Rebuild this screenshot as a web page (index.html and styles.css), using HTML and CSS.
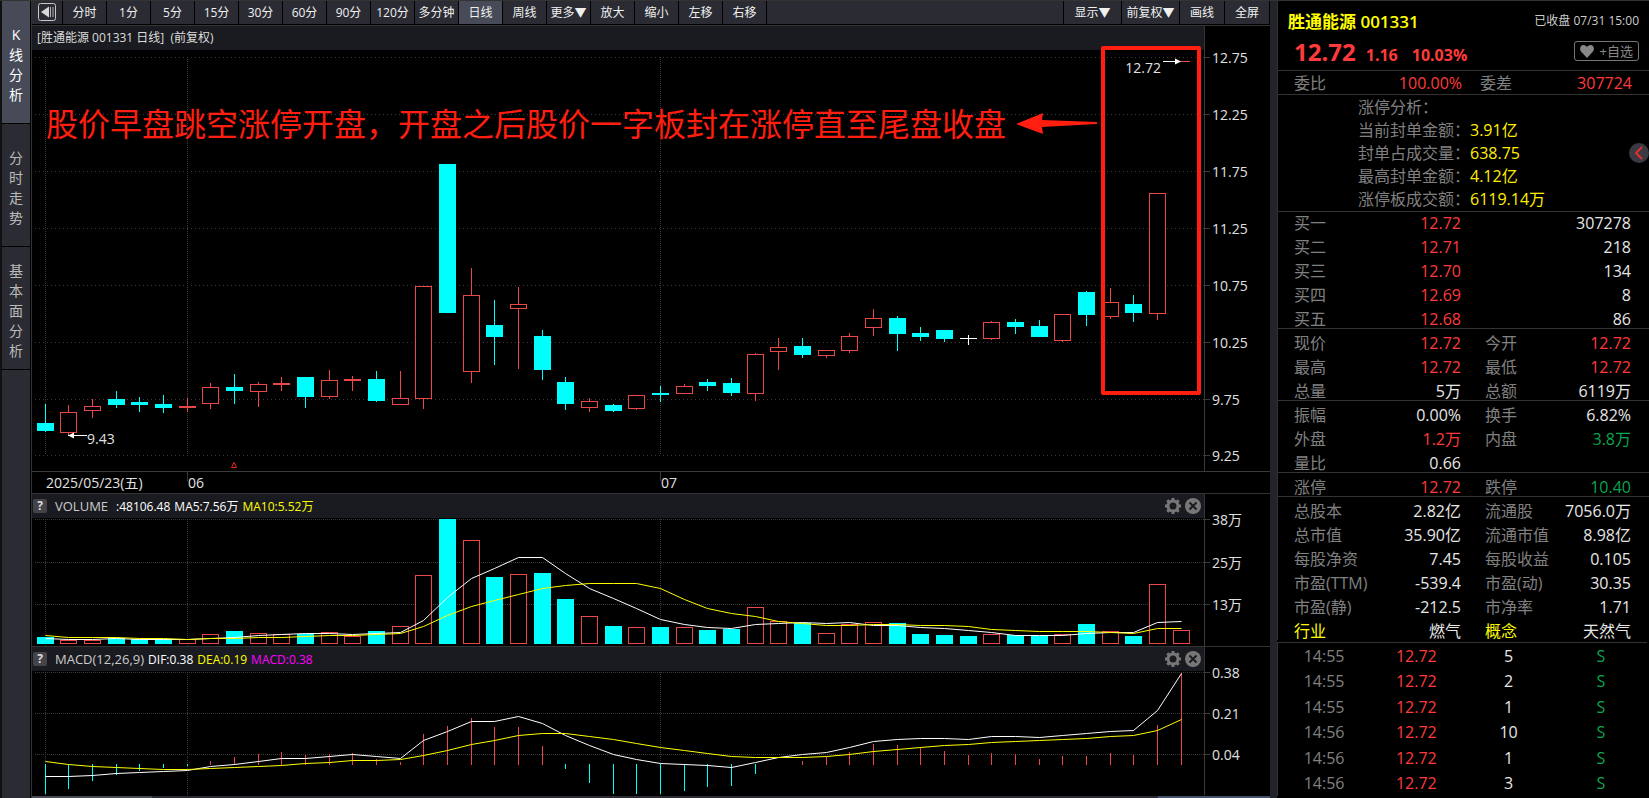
FILE: index.html
```html
<!DOCTYPE html>
<html lang="zh-CN">
<head>
  <meta charset="UTF-8">
  <title>胜通能源 001331</title>
  <meta name="viewport" content="width=device-width, initial-scale=1.0">
  <link rel="stylesheet" href="styles.css">
</head>
<body>
  <div class="app">
    <nav class="side">
      <button class="side-tab active"><span>K线分析</span></button>
      <button class="side-tab"><span>分时走势</span></button>
      <button class="side-tab"><span>基本面分析</span></button>
    </nav>

    <main class="main">
      <div class="toolbar">
        <button class="tool back" aria-label="收起">
          <svg width="18" height="18" viewBox="0 0 18 18">
            <rect x="0.5" y="0.5" width="17" height="17" rx="2" fill="none" stroke="#c8c8c8"/>
            <path d="M3 9 L11 3.5 V14.5 Z" fill="#d8d8d8"/>
            <path d="M12.5 4 V14 M15 4 V14" stroke="#b0b0b0"/>
          </svg>
        </button>
        <button class="tool">分时</button>
        <button class="tool">1分</button>
        <button class="tool">5分</button>
        <button class="tool">15分</button>
        <button class="tool">30分</button>
        <button class="tool">60分</button>
        <button class="tool">90分</button>
        <button class="tool">120分</button>
        <button class="tool">多分钟</button>
        <button class="tool active">日线</button>
        <button class="tool">周线</button>
        <button class="tool">更多▼</button>
        <button class="tool">放大</button>
        <button class="tool">缩小</button>
        <button class="tool">左移</button>
        <button class="tool">右移</button>
        <span class="tool-space"></span>
        <button class="tool wide">显示▼</button>
        <button class="tool wide">前复权▼</button>
        <button class="tool mid">画线</button>
        <button class="tool mid">全屏</button>
      </div>

      <section class="pane kline">
        <div class="pane-head kline-head">[胜通能源 001331 日线]&nbsp; (前复权)</div>
        <svg id="kline" class="chart chart-k"></svg>
        <div class="note">
          <span>股价早盘跳空涨停开盘，开盘之后股价一字板封在涨停直至尾盘收盘</span>
          <svg width="82" height="22" viewBox="0 0 82 22">
            <path d="M0 11 L27 0 L26 7 L81 9 V11 L26 14 L27 21 Z" fill="#ff1e0f"/>
          </svg>
        </div>
        <div class="frame"></div>
      </section>

      <section class="pane">
        <div class="pane-head">
          <button class="help">?</button>
          <span class="ind-name">VOLUME</span>
          <span class="white">:48106.48</span>
          <span class="white">MA5:7.56万</span>
          <span class="yellow">MA10:5.52万</span>
          <span class="head-icons">
            <button aria-label="设置"><svg width="16" height="16" viewBox="0 0 16 16"><circle cx="8" cy="8" r="5" fill="none" stroke="#777" stroke-width="3"/><path d="M8 0V3M8 13V16M0 8H3M13 8H16M2.3 2.3L4.4 4.4M11.6 11.6L13.7 13.7M2.3 13.7L4.4 11.6M11.6 4.4L13.7 2.3" stroke="#777" stroke-width="3"/></svg></button>
            <button aria-label="关闭"><svg width="16" height="16" viewBox="0 0 16 16"><circle cx="8" cy="8" r="8" fill="#777"/><path d="M4.5 4.5L11.5 11.5M11.5 4.5L4.5 11.5" stroke="#1a1b20" stroke-width="2"/></svg></button>
          </span>
        </div>
        <svg id="volume" class="chart chart-v"></svg>
      </section>

      <section class="pane">
        <div class="pane-head">
          <button class="help">?</button>
          <span class="ind-name">MACD(12,26,9)</span>
          <span class="white">DIF:0.38</span>
          <span class="yellow">DEA:0.19</span>
          <span class="magenta">MACD:0.38</span>
          <span class="head-icons">
            <button aria-label="设置"><svg width="16" height="16" viewBox="0 0 16 16"><circle cx="8" cy="8" r="5" fill="none" stroke="#777" stroke-width="3"/><path d="M8 0V3M8 13V16M0 8H3M13 8H16M2.3 2.3L4.4 4.4M11.6 11.6L13.7 13.7M2.3 13.7L4.4 11.6M11.6 4.4L13.7 2.3" stroke="#777" stroke-width="3"/></svg></button>
            <button aria-label="关闭"><svg width="16" height="16" viewBox="0 0 16 16"><circle cx="8" cy="8" r="8" fill="#777"/><path d="M4.5 4.5L11.5 11.5M11.5 4.5L4.5 11.5" stroke="#1a1b20" stroke-width="2"/></svg></button>
          </span>
        </div>
        <svg id="macd" class="chart chart-m"></svg>
      </section>
      <div class="scroll"><i class="scroll-left"></i><i class="scroll-right"></i></div>
    </main>

    <aside class="quote">
      <header class="quote-head">
        <div class="line">
          <h1>胜通能源 001331</h1>
          <span class="time">已收盘 07/31 15:00</span>
        </div>
        <div class="line price-line">
          <b class="price">12.72</b>
          <b class="chg">1.16</b>
          <b class="chg">10.03%</b>
          <button class="fav">
            <svg width="14" height="13" viewBox="0 0 14 13"><path d="M7 13 L1 6.5 C-1 3.5 0.5 0 3.5 0 C5.3 0 6.4 1 7 2.2 C7.6 1 8.7 0 10.5 0 C13.5 0 15 3.5 13 6.5 Z" fill="#888"/></svg>
            +自选
          </button>
        </div>
      </header>

      <div class="ratio">
        <span>委比</span><span class="red">100.00%</span>
        <span>委差</span><span class="red">307724</span>
      </div>

      <dl class="limit">
        <dt>涨停分析：</dt><dd></dd>
        <dt>当前封单金额：</dt><dd>3.91亿</dd>
        <dt>封单占成交量：</dt><dd>638.75</dd>
        <dt>最高封单金额：</dt><dd>4.12亿</dd>
        <dt>涨停板成交额：</dt><dd>6119.14万</dd>
      </dl>
      <button class="fold" aria-label="展开">
        <svg width="8" height="14" viewBox="0 0 8 14"><path d="M7 1 L1 7 L7 13" fill="none" stroke="#e03030" stroke-width="2"/></svg>
      </button>

      <table class="info">
        <colgroup><col class="c1"><col class="c2"><col class="c3"><col></colgroup>
        <tbody>
          <tr><th>买一</th><td class="red">12.72</td><th></th><td>307278</td></tr>
          <tr><th>买二</th><td class="red">12.71</td><th></th><td>218</td></tr>
          <tr><th>买三</th><td class="red">12.70</td><th></th><td>134</td></tr>
          <tr><th>买四</th><td class="red">12.69</td><th></th><td>8</td></tr>
          <tr><th>买五</th><td class="red">12.68</td><th></th><td>86</td></tr>
        </tbody>
        <tbody>
          <tr><th>现价</th><td class="red">12.72</td><th>今开</th><td class="red">12.72</td></tr>
          <tr><th>最高</th><td class="red">12.72</td><th>最低</th><td class="red">12.72</td></tr>
          <tr><th>总量</th><td>5万</td><th>总额</th><td>6119万</td></tr>
        </tbody>
        <tbody>
          <tr><th>振幅</th><td>0.00%</td><th>换手</th><td>6.82%</td></tr>
          <tr><th>外盘</th><td class="red">1.2万</td><th>内盘</th><td class="green">3.8万</td></tr>
          <tr><th>量比</th><td>0.66</td><th></th><td></td></tr>
        </tbody>
        <tbody>
          <tr><th>涨停</th><td class="red">12.72</td><th>跌停</th><td class="green">10.40</td></tr>
        </tbody>
        <tbody>
          <tr><th>总股本</th><td>2.82亿</td><th>流通股</th><td>7056.0万</td></tr>
          <tr><th>总市值</th><td>35.90亿</td><th>流通市值</th><td>8.98亿</td></tr>
          <tr><th>每股净资</th><td>7.45</td><th>每股收益</th><td>0.105</td></tr>
          <tr><th>市盈(TTM)</th><td>-539.4</td><th>市盈(动)</th><td>30.35</td></tr>
          <tr><th>市盈(静)</th><td>-212.5</td><th>市净率</th><td>1.71</td></tr>
          <tr><th class="yellow">行业</th><td>燃气</td><th class="yellow">概念</th><td>天然气</td></tr>
        </tbody>
      </table>

      <table class="ticks">
        <tr><th>14:55</th><td class="red">12.72</td><td>5</td><td class="green">S</td></tr>
        <tr><th>14:55</th><td class="red">12.72</td><td>2</td><td class="green">S</td></tr>
        <tr><th>14:55</th><td class="red">12.72</td><td>1</td><td class="green">S</td></tr>
        <tr><th>14:56</th><td class="red">12.72</td><td>10</td><td class="green">S</td></tr>
        <tr><th>14:56</th><td class="red">12.72</td><td>1</td><td class="green">S</td></tr>
        <tr><th>14:56</th><td class="red">12.72</td><td>3</td><td class="green">S</td></tr>
      </table>
    </aside>
  </div>

  <script src="chart.js"></script>
</body>
</html>
```
FILE: styles.css
```css
* {
  box-sizing: border-box;
}

body {
  margin: 0;
  background: #000;
  color: #e6e6e6;
  font-family: "Open Sans", "Noto Sans CJK SC", sans-serif;
  font-size: 12px;
}

button {
  margin: 0;
  padding: 0;
  border: none;
  background: none;
  color: inherit;
  font: inherit;
  cursor: pointer;
}

.red { color: #ff3a3a; }
.green { color: #0aa54e; }
.white { color: #fff; }
.yellow { color: #ffff00; }
.magenta { color: #ff00ff; }

.app {
  display: flex;
  min-height: 100vh;
  border-top: 1px solid #333;
}

/* left tabs */
.side {
  flex: none;
  width: 31px;
  background: #2b2b33;
  border-left: 2px solid #111;
  border-right: 1px solid #000;
}

.side-tab {
  display: flex;
  justify-content: center;
  align-items: center;
  width: 100%;
  height: 123px;
  padding-top: 6px;
  border-bottom: 1px solid #000;
  color: #bbb;
  font-size: 14px;
  line-height: 20px;
}

.side-tab span {
  width: 14px;
  word-break: break-all;
}

.side-tab.active {
  background: #464b57;
  color: #fff;
}

/* charts */
.main {
  flex: 1;
  min-width: 0;
  display: flex;
  flex-direction: column;
  border-left: 1px solid #333;
}

.toolbar {
  display: flex;
  height: 25px;
  padding-bottom: 1px;
  background: #000;
  border-bottom: 1px solid #333;
}

.tool {
  flex: none;
  width: 44px;
  padding-bottom: 1px;
  background: #2a2b33;
  border-right: 1px solid #000;
  color: #f0f0f0;
  white-space: nowrap;
}

.tool.active {
  background: #464b57;
}

.tool.back {
  width: 31px;
  display: flex;
  align-items: center;
  justify-content: center;
}

.tool.wide { width: 58px; }
.tool.mid { width: 45px; }

.tool-space {
  flex: 1;
  background: #2a2b33;
  border-right: 1px solid #000;
}

.pane {
  position: relative;
  border-top: 1px solid #333;
}

.kline {
  border-top: none;
}

.pane-head {
  display: flex;
  align-items: center;
  gap: 4px;
  height: 24px;
  margin-right: 65px;
  padding: 0 3px 0 1px;
  background: #1a1b20;
  border-right: 1px solid #333;
  color: #ccc;
  white-space: nowrap;
}

.kline-head {
  padding: 0 0 2px 5px;
  color: #ddd;
}

.help {
  width: 14px;
  height: 14px;
  margin-right: 4px;
  border-radius: 2px;
  background: #444448;
  color: #ddd;
  font-weight: bold;
  line-height: 14px;
}

.ind-name {
  min-width: 57px;
  font-size: 13px;
}

.head-icons {
  display: flex;
  gap: 4px;
  margin-left: auto;
}

.head-icons svg {
  display: block;
}

.chart {
  display: block;
  width: 100%;
  overflow: visible;
  font-size: 14px;
}

.chart-k { height: 443px; }
.chart-v { height: 128px; }
.chart-m { height: 125px; }

.chart text {
  fill: #e0e0e0;
}

.note {
  position: absolute;
  top: 75px;
  right: 172px;
  display: flex;
  align-items: center;
  gap: 10px;
  color: #ff1e0f;
  font-size: 32px;
  line-height: 46px;
  white-space: nowrap;
}

.frame {
  position: absolute;
  top: 20px;
  right: 69px;
  width: 100px;
  height: 349px;
  border: 4px solid #ff1e0f;
  border-radius: 2px;
}

.scroll {
  display: flex;
  justify-content: space-between;
  flex: 1;
  min-height: 2px;
  background: #2a2b33;
}

.scroll-left {
  width: 120px;
  background: #484b55;
}

.scroll-right {
  width: 112px;
  background: #43536b;
}

/* right quote panel */
.quote {
  position: relative;
  flex: none;
  display: flex;
  flex-direction: column;
  width: 379px;
  background: #000;
  border-left: 7px solid #23232b;
  font-size: 16px;
}

.quote-head {
  height: 70px;
  padding: 7px 10px 0 10px;
  border-left: 1px solid #333;
  border-bottom: 1px solid #333;
}

.line {
  display: flex;
  align-items: center;
  height: 24px;
}

h1 {
  margin: 0;
  color: #ffff00;
  font-size: 17px;
  font-weight: 600;
}

.time {
  margin-left: auto;
  color: #ccc;
  font-size: 12px;
}

.price-line {
  align-items: baseline;
  height: 38px;
  padding-left: 6px;
  line-height: 40px;
  color: #ff3a3a;
}

.price {
  margin-right: 10px;
  font-size: 24px;
}

.chg {
  margin-right: 14px;
  font-size: 16px;
}

.fav {
  display: flex;
  align-items: center;
  align-self: flex-start;
  justify-content: space-between;
  width: 65px;
  height: 20px;
  margin: 9px 0 0 auto;
  padding: 0 5px;
  border: 1px solid #777;
  border-radius: 3px;
  color: #888;
  font-size: 13px;
  line-height: 18px;
}

.ratio {
  display: grid;
  grid-template-columns: 84px 84px 60px 1fr;
  height: 24px;
  padding: 0 17px 0 16px;
  border-left: 1px solid #333;
  border-bottom: 1px solid #333;
  color: #808080;
  line-height: 24px;
}

.ratio .red {
  text-align: right;
}

.ratio span:nth-child(3) {
  padding-left: 18px;
}

.limit {
  display: grid;
  grid-template-columns: 112px 1fr;
  grid-auto-rows: 23px;
  height: 116px;
  margin: 0;
  padding: 1px 0 0 80px;
  border-left: 1px solid #333;
  color: #808080;
  line-height: 23px;
}

.limit dt {
  white-space: nowrap;
}

.limit dd {
  margin: 0;
  color: #ffee00;
}

.fold {
  position: absolute;
  top: 142px;
  right: 0;
  display: flex;
  align-items: center;
  justify-content: center;
  width: 20px;
  height: 20px;
  border-radius: 50%;
  background: #3a3a42;
}

table {
  width: 100%;
  border-spacing: 0;
  border-left: 1px solid #333;
}

th {
  color: #808080;
  font-weight: normal;
  text-align: left;
  white-space: nowrap;
}

.info {
  table-layout: fixed;
}

.info th,
.info td {
  height: 24px;
  padding: 6px 0 0 0;
  line-height: 18px;
}

.info td {
  text-align: right;
  white-space: nowrap;
}

.info th:first-child { padding-left: 16px; }
.info th:nth-child(3) { padding-left: 24px; }
.info td:last-child { padding-right: 18px; }

.info tr:first-child > * {
  padding-top: 5px;
  border-top: 1px solid #333;
}

.info tbody:first-of-type tr:first-child > * {
  height: 21px;
  padding-top: 2px;
}

.info .yellow { color: #ffff00; }

.c1 { width: 101px; }
.c2 { width: 82px; }
.c3 { width: 92px; }

.ticks {
  flex: 1;
  width: auto;
  margin: 2px 2px 2px 0;
  border-top: 1px solid #333;
  table-layout: fixed;
}

.ticks th,
.ticks td {
  width: 25%;
  padding: 0;
  line-height: 20px;
  text-align: center;
}
```
FILE: chart.js
```js
const RED = '#e84848';
const CYAN = '#00ffff';
const GRID = '#3a3a3a';
const AXIS = 66;

// [color, high, body top, body bottom, low]
const candles = [
  ['c',404,423,431,432], ['r',405,412,433,436], ['r',399,406,411,418], ['c',391,399,405,408],
  ['c',397,402,405,412], ['c',395,404,408,413], ['r',398,406,408,412], ['r',383,387,404,409],
  ['c',374,387,391,404], ['r',382,384,392,407], ['r',377,383,385,391], ['c',377,377,397,408],
  ['r',370,380,397,399], ['r',376,379,381,391], ['c',371,379,401,402], ['r',371,398,405,405],
  ['r',286,286,399,409], ['c',164,164,313,313], ['r',268,295,372,383], ['c',300,325,337,365],
  ['r',287,304,309,369], ['c',330,336,370,380], ['c',377,382,404,410], ['r',398,401,408,412],
  ['c',404,405,411,412], ['r',395,395,409,410], ['c',386,393,395,402], ['r',384,386,394,394],
  ['c',379,382,386,391], ['c',378,383,393,396], ['r',353,354,394,401], ['r',338,347,352,370],
  ['c',338,346,355,358], ['r',350,350,356,358], ['r',333,336,351,353], ['r',309,318,328,336],
  ['c',316,318,334,351], ['c',327,333,337,341], ['c',330,330,339,342], ['w',335,338,339,345],
  ['r',321,322,339,340], ['c',319,322,327,334], ['c',320,326,337,337], ['r',314,314,341,342],
  ['c',291,292,315,326], ['r',288,302,317,319], ['c',295,304,313,322], ['r',193,193,314,320],
  ['r',61,61,62,62]
];

const volumes = [637,640,640,638,639,639,639,634,631,633,634,634,632,636,631,626,575,519,540,577,574,573,599,616,626,627,627,627,630,629,607,621,623,633,624,622,623,634,635,636,634,635,636,634,624,631,636,584,630];
const ma5 = [638,639,639,638,639,639,639,638,637,635,634,633,633,634,633,632,620,597,578,568,557,557,573,588,598,608,619,624,627,628,624,623,622,623,622,625,625,627,628,630,632,635,635,635,633,632,632,622,621];
const ma10 = [635,637,637,637,638,638,639,638,638,637,637,636,635,635,634,633,626,615,606,600,594,588,585,583,583,583,588,599,608,613,616,621,623,625,625,624,624,625,625,626,629,630,631,631,631,632,633,628,628];

const hist = [794,789,781,775,771,768,766,761,757,754,752,755,754,753,759,762,734,726,718,727,727,746,769,783,794,794,794,791,787,786,774,764,761,757,752,744,745,747,751,755,753,754,759,756,756,753,755,725,673];
const dif = [776,776,775,773,772,771,770,766,764,761,758,758,756,754,756,758,740,731,721,721,716,723,735,745,754,759,763,764,765,767,762,757,754,752,747,741,739,738,738,739,736,736,737,735,733,731,730,710,673];
const dea = [761,764,766,767,768,769,769,768,767,766,765,763,762,760,760,759,755,750,744,740,735,733,733,736,739,743,747,750,753,756,757,757,757,756,754,751,749,747,745,744,742,741,740,739,738,736,735,730,719];

function rect(x, y, w, h, fill) {
  return `<rect x="${x}" y="${y}" width="${w}" height="${h}" fill="${fill}"/>`;
}

function box(x, top, bottom) {
  return `<rect x="${x - 7.5}" y="${top + 0.5}" width="16" height="${bottom - top - 1}" fill="#000" stroke="${RED}"/>`;
}

function line(x1, y1, x2, y2, dash) {
  return `<line x1="${x1}" y1="${y1}" x2="${x2}" y2="${y2}" stroke="${GRID}" stroke-dasharray="${dash || 'none'}"/>`;
}

function text(x, y, str) {
  return `<text x="${x}" y="${y}">${str}</text>`;
}

function poly(values, xs, color) {
  const pts = values.map((v, i) => `${xs[i] + 0.5},${v + 0.5}`).join(' ');
  return `<polyline points="${pts}" fill="none" stroke="${color}"/>`;
}

// grid lines, right axis and its labels
function grid(xs, right, labels, top, bottom, gridTop, gridBottom, dash) {
  let s = line(right + 0.5, top, right + 0.5, bottom);
  for (const [y, label] of labels) {
    s += line(3, y + 0.5, right, y + 0.5, dash);
    s += line(right, y + 0.5, right + 6, y + 0.5);
    s += text(right + 8, y + 6, label);
  }
  for (const i of [0, 6, 26]) {
    s += line(xs[i] + 0.5, gridTop, xs[i] + 0.5, gridBottom, '1 1');
  }
  return s;
}

function draw() {
  const k = document.getElementById('kline');
  const v = document.getElementById('volume');
  const m = document.getElementById('macd');
  const width = k.clientWidth;
  const right = width - AXIS;
  const step = (right - 36) / (candles.length - 1);
  const xs = candles.map((c, i) => Math.floor(13 + i * step + 0.01));

  k.setAttribute('viewBox', `0 50 ${width} 443`);
  v.setAttribute('viewBox', `0 518 ${width} 128`);
  m.setAttribute('viewBox', `0 671 ${width} 125`);

  let s = '<g shape-rendering="crispEdges">';
  s += grid(xs, right, [[57,'12.75'],[114,'12.25'],[171,'11.75'],[228,'11.25'],[285,'10.75'],[342,'10.25'],[399,'9.75'],[455,'9.25']], 50, 471, 57, 455, '1 3');
  s += line(0, 471.5, width, 471.5);
  s += line(xs[6] + 0.5, 472, xs[6] + 0.5, 481) + line(xs[26] + 0.5, 472, xs[26] + 0.5, 481);
  candles.forEach(([c, high, top, bottom, low], i) => {
    const x = xs[i];
    const color = c === 'r' ? RED : c === 'c' ? CYAN : '#fff';
    s += rect(x, high, 1, low - high, color);
    s += c === 'r' && bottom - top > 2 ? box(x, top, bottom) : rect(x - 8, top, 17, bottom - top, color);
  });
  s += '</g>';
  // low and high marks
  const last = xs[xs.length - 1];
  s += `<path d="M${xs[1]} 435.5 h19" stroke="#fff"/><path d="M${xs[1]} 435.5 l6 -3 v6 z" fill="#fff"/>`;
  s += `<path d="M${last - 18} 61.5 h16" stroke="#fff"/><path d="M${last} 61.5 l-6 -3 v6 z" fill="#fff"/>`;
  s += text(xs[1] + 19, 444, '9.43');
  s += `<text x="${last - 20}" y="73" text-anchor="end">12.72</text>`;
  s += `<path d="M${xs[8]} 462.5 l2.5 5 h-5 z" fill="none" stroke="#f02020"/>`;
  s += text(xs[0] + 1, 488, '2025/05/23(五)') + text(xs[6] + 1, 488, '06') + text(xs[26] + 1, 488, '07');
  k.innerHTML = s;

  s = '<g shape-rendering="crispEdges">';
  s += grid(xs, right, [[519,'38万'],[562,'25万'],[604,'13万']], 518, 646, 519, 646, '1 1');
  volumes.forEach((top, i) => {
    s += candles[i][0] === 'r' ? box(xs[i], top, 644) : rect(xs[i] - 8, top, 17, 644 - top, CYAN);
  });
  s += '</g>' + poly(ma5, xs, '#fff') + poly(ma10, xs, '#ffff00');
  v.innerHTML = s;

  s = '<g shape-rendering="crispEdges">';
  s += grid(xs, right, [[672,'0.38'],[713,'0.21'],[754,'0.04']], 671, 795, 672, 795, '1 1');
  hist.forEach((y, i) => {
    s += y > 764 ? rect(xs[i], 764, 1, y - 764, CYAN) : y < 764 ? rect(xs[i], y, 1, 765 - y, RED) : '';
  });
  s += '</g>' + poly(dif, xs, '#fff') + poly(dea, xs, '#ffff00');
  m.innerHTML = s;
}

draw();
window.addEventListener('resize', draw);
```
